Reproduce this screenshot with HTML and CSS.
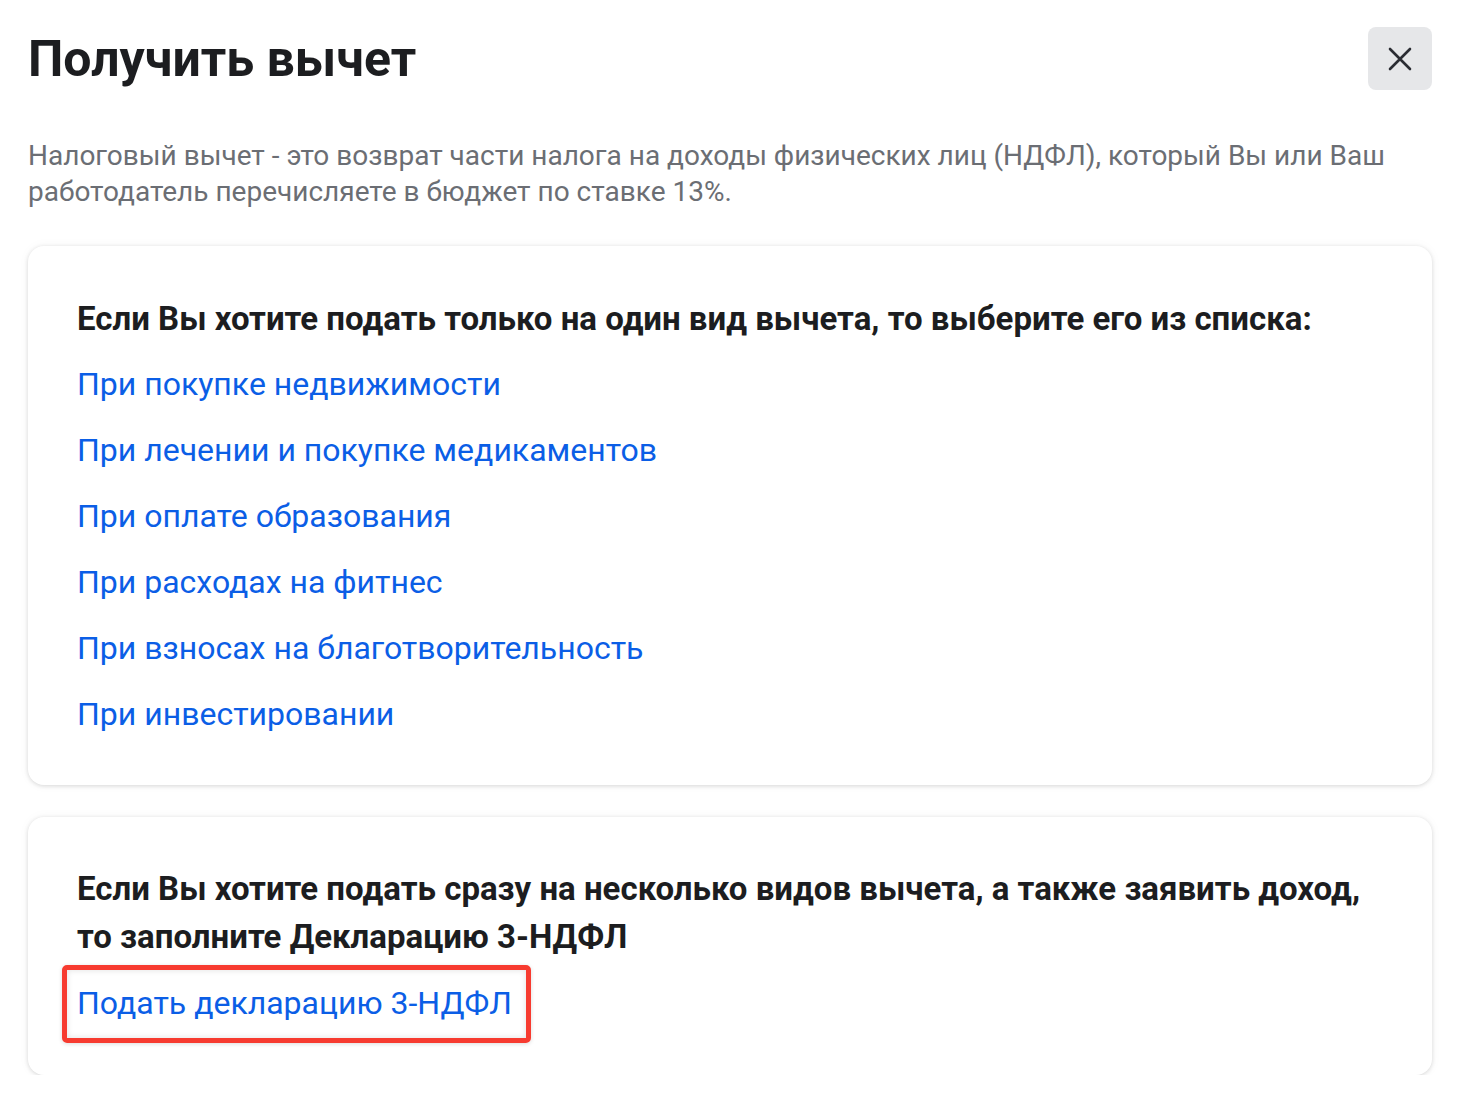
FILE: index.html
```html
<!DOCTYPE html>
<html lang="ru">
<head>
<meta charset="utf-8">
<link rel="stylesheet" href="styles.css">
</head>
<body>
<div class="page">
  <header class="header">
    <h1 class="title">Получить вычет</h1>
    <button class="close" aria-label="Закрыть">
      <svg width="24" height="24" viewBox="0 0 24 24"><path d="M2 2L22 22M22 2L2 22" stroke="#2b2d33" stroke-width="2.6" stroke-linecap="round" fill="none"/></svg>
    </button>
  </header>
  <p class="desc">Налоговый вычет - это возврат части налога на доходы физических лиц (НДФЛ), который Вы или Ваш работодатель перечисляете в бюджет по ставке 13%.</p>
  <section class="card">
    <h2 class="card-title">Если Вы хотите подать только на один вид вычета, то выберите его из списка:</h2>
    <ul class="links">
      <li><a href="#">При покупке недвижимости</a></li>
      <li><a href="#">При лечении и покупке медикаментов</a></li>
      <li><a href="#">При оплате образования</a></li>
      <li><a href="#">При расходах на фитнес</a></li>
      <li><a href="#">При взносах на благотворительность</a></li>
      <li><a href="#">При инвестировании</a></li>
    </ul>
  </section>
  <section class="card card2">
    <h2 class="card-title multi">Если Вы хотите подать сразу на несколько видов вычета, а также заявить доход, то заполните Декларацию 3-НДФЛ</h2>
    <div class="highlight"><a href="#">Подать декларацию 3-НДФЛ</a></div>
  </section>
</div>
</body>
</html>
```

FILE: styles.css
```css
* { box-sizing: border-box; }
html, body { margin: 0; padding: 0; background: #ffffff; }
body { font-family: Roboto, "Noto Sans", sans-serif; color: #1f2023; }
.page { padding: 27px 25px 0 28px; }
.header { display: flex; justify-content: space-between; align-items: flex-start; }
.title { margin: 0; padding-top: 4px; font-size: 50px; font-weight: 700; line-height: 56px; color: #1c1d20; letter-spacing: 0; }
.close { width: 64px; height: 63px; border: none; border-radius: 8px; background: #e6e7e9; display: flex; align-items: center; justify-content: center; padding: 0; cursor: pointer; }
.desc { margin: 48px 0 0; font-size: 28px; line-height: 36px; color: #6b6e74; max-width: 1400px; }
.card { margin-top: 36px; background: #fff; border-radius: 16px; box-shadow: 0 1px 4px rgba(0,0,0,0.14), 0 0 12px rgba(0,0,0,0.04); padding: 49px 49px 50px; }
.card2 { margin-top: 32px; padding-top: 48px; padding-bottom: 32px; }
.card-title { margin: 0; font-size: 33px; font-weight: 700; line-height: 48px; color: #1c1d20; }
.links { list-style: none; margin: 20px 0 0; padding: 0; display: flex; flex-direction: column; gap: 24px; }
.links li { font-size: 32px; line-height: 42px; }
a { color: #0b5ee6; text-decoration: none; font-size: 32px; }
.highlight { margin: 4px 0 0 -15px; display: inline-block; border: 5px solid #f73b30; border-radius: 5px; padding: 12px 14px 14px 10px; box-shadow: inset 0 0 6px rgba(0,0,0,0.12), 0 1px 4px rgba(0,0,0,0.14); font-size: 32px; line-height: 42px; }
```
